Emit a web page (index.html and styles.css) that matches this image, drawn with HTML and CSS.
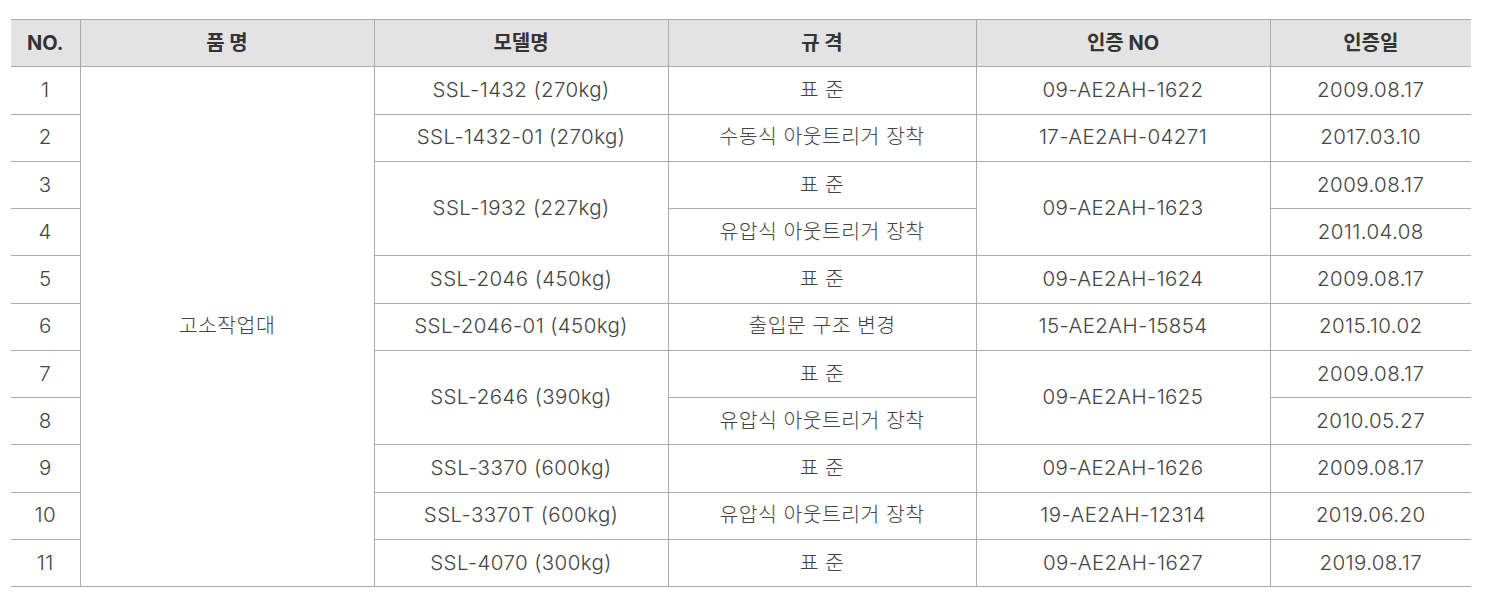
FILE: index.html
```html
<!DOCTYPE html>
<html lang="ko">
<head>
<meta charset="utf-8">
<link rel="stylesheet" href="styles.css">
</head>
<body>
<div class="wrap">
<table class="cert">
<colgroup>
<col class="c-no"><col class="c-name"><col class="c-model"><col class="c-spec"><col class="c-cert"><col class="c-date">
</colgroup>
<thead>
<tr><th>NO.</th><th>품 명</th><th>모델명</th><th>규 격</th><th>인증 NO</th><th>인증일</th></tr>
</thead>
<tbody>
<tr><td>1</td><td rowspan="11">고소작업대</td><td>SSL-1432 (270kg)</td><td>표 준</td><td>09-AE2AH-1622</td><td>2009.08.17</td></tr>
<tr><td>2</td><td>SSL-1432-01 (270kg)</td><td>수동식 아웃트리거 장착</td><td>17-AE2AH-04271</td><td>2017.03.10</td></tr>
<tr><td>3</td><td rowspan="2">SSL-1932 (227kg)</td><td>표 준</td><td rowspan="2">09-AE2AH-1623</td><td>2009.08.17</td></tr>
<tr><td>4</td><td>유압식 아웃트리거 장착</td><td>2011.04.08</td></tr>
<tr><td>5</td><td>SSL-2046 (450kg)</td><td>표 준</td><td>09-AE2AH-1624</td><td>2009.08.17</td></tr>
<tr><td>6</td><td>SSL-2046-01 (450kg)</td><td>출입문 구조 변경</td><td>15-AE2AH-15854</td><td>2015.10.02</td></tr>
<tr><td>7</td><td rowspan="2">SSL-2646 (390kg)</td><td>표 준</td><td rowspan="2">09-AE2AH-1625</td><td>2009.08.17</td></tr>
<tr><td>8</td><td>유압식 아웃트리거 장착</td><td>2010.05.27</td></tr>
<tr><td>9</td><td>SSL-3370 (600kg)</td><td>표 준</td><td>09-AE2AH-1626</td><td>2009.08.17</td></tr>
<tr><td>10</td><td>SSL-3370T (600kg)</td><td>유압식 아웃트리거 장착</td><td>19-AE2AH-12314</td><td>2019.06.20</td></tr>
<tr><td>11</td><td>SSL-4070 (300kg)</td><td>표 준</td><td>09-AE2AH-1627</td><td>2019.08.17</td></tr>
</tbody>
</table>
</div>
</body>
</html>
```
FILE: styles.css
```css
html, body { margin: 0; padding: 0; background: #fff; }
.wrap { padding: 19px 14px 0 11px; }
.cert {
  width: 1460px;
  border-collapse: collapse;
  table-layout: fixed;
  font-family: Inter, "Noto Sans CJK KR", sans-serif;
  font-size: 20.5px;
  font-weight: 300;
  color: #444;
}
.c-no { width: 69px; }
.c-name { width: 294px; }
.c-model { width: 294px; }
.c-spec { width: 308px; }
.c-cert { width: 294px; }
.c-date { width: 201px; }
.cert th, .cert td {
  border: 1px solid #aaa;
  text-align: center;
  vertical-align: middle;
  padding: 0;
  height: 46.25px;
  line-height: 1.2;
}
.cert td { letter-spacing: 0.4px; }
.cert tr > :first-child { border-left: none; }
.cert tr > :last-child { border-right: none; }
.cert th {
  background: #e3e3e3;
  color: #333;
  font-weight: 700;
  font-size: 20px;
}
```
